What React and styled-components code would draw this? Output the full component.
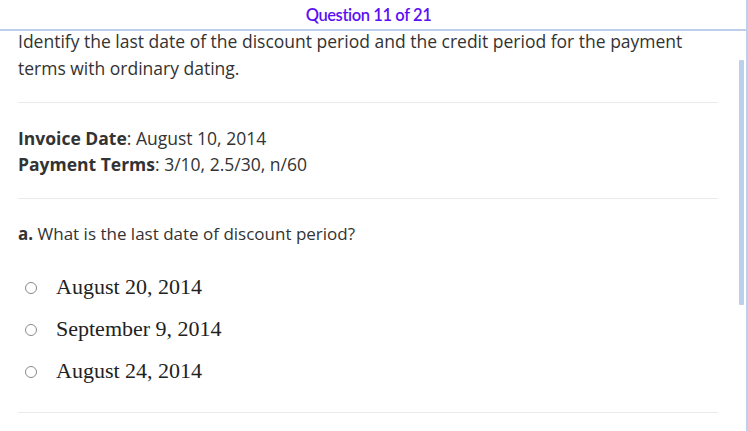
import React from "react";
import styled, { createGlobalStyle } from "styled-components";

const Global = createGlobalStyle`
  html, body { margin: 0; padding: 0; background: #fff; }
  body { width: 748px; height: 431px; overflow: hidden; }
`;

const Frame = styled.div`
  position: relative;
  width: 748px;
  height: 431px;
  box-sizing: border-box;
  border-right: 2px solid #bcd0ec;
  display: flex;
  flex-direction: column;
`;

const Header = styled.div`
  height: 31px;
  border-bottom: 2px solid #bcd0ec;
  display: flex;
  align-items: center;
  justify-content: center;
  font-family: Lato, sans-serif;
  font-size: 16.5px;
  font-weight: 600;
  letter-spacing: -0.4px;
  color: #5a0ff5;
  padding: 1px 9px 0 0;
  box-sizing: border-box;
`;

const Body = styled.div`
  padding: 0 28px 0 18px;
  font-family: "Open Sans", sans-serif;
  font-size: 17.5px;
  color: #333;
`;

const Prompt = styled.p`
  margin: -3px 0 0;
  line-height: 27px;
`;

const Rule = styled.hr`
  border: 0;
  border-top: 1px solid #ebebeb;
  margin: ${(p) => p.$m || "0"};
`;

const Info = styled.div`
  line-height: 26px;
`;

const Label = styled.strong`
  font-weight: 700;
`;

const Question = styled.div`
  font-size: 17px;
  line-height: 24px;
`;

const Options = styled.div`
  display: flex;
  flex-direction: column;
  gap: 16px;
  padding-left: 7px;
  margin-top: ${(p) => p.$top || "0"};
`;

const Option = styled.label`
  display: flex;
  align-items: center;
  gap: 19px;
  font-family: "Liberation Serif", serif;
  font-size: 22px;
  color: #222;
  line-height: 26px;
`;

const Radio = styled.span`
  width: 12px;
  height: 12px;
  border: 1px solid #8a8a8a;
  border-radius: 50%;
  box-sizing: border-box;
  background: #fff;
  margin-top: 1px;
`;

const Scroll = styled.div`
  position: absolute;
  right: 2px;
  top: 60px;
  width: 5px;
  height: 245px;
  background: #bcd0ec;
  border-radius: 1px;
`;

export default function App() {
  const opts = ["August 20, 2014", "September 9, 2014", "August 24, 2014"];
  return (
    <>
      <Global />
      <Frame>
        <Header>Question 11 of 21</Header>
        <Body>
          <Prompt>
            Identify the last date of the discount period and the credit period for the payment
            terms with ordinary dating.
          </Prompt>
          <Rule $m="20px 0 22px" />
          <Info>
            <div><Label>Invoice Date</Label>: August 10, 2014</div>
            <div><Label>Payment Terms</Label>: 3/10, 2.5/30, n/60</div>
          </Info>
          <Rule $m="21px 0 23px" />
          <Question><Label>a.</Label> What is the last date of discount period?</Question>
          <Options $top="28px">
            {opts.map((o) => (
              <Option key={o}>
                <Radio />
                {o}
              </Option>
            ))}
          </Options>
          <Rule $m="28px 0 0" />
        </Body>
        <Scroll />
      </Frame>
    </>
  );
}
